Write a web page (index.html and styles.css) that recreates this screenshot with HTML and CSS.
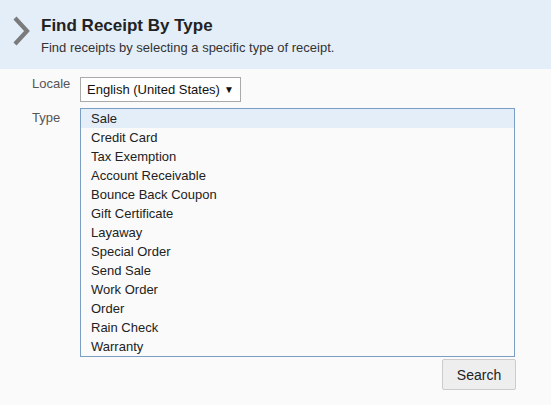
FILE: index.html
```html
<!DOCTYPE html>
<html>
<head>
<meta charset="utf-8">
<link rel="stylesheet" href="styles.css">
</head>
<body>
<div class="header">
  <svg class="chev" width="20" height="30" viewBox="0 0 20 30"><path d="M3 2 L15 15 L3 28" fill="none" stroke="#7b7b7b" stroke-width="4.2"/></svg>
  <div class="htext">
    <div class="title">Find Receipt By Type</div>
    <div class="sub">Find receipts by selecting a specific type of receipt.</div>
  </div>
</div>
<div class="form">
  <div class="row">
    <div class="label label-locale">Locale</div>
    <div class="select"><span>English (United States)</span><span class="arrow">▼</span></div>
  </div>
  <div class="row">
    <div class="label label-type">Type</div>
    <div class="col">
      <div class="list">
        <div class="item sel">Sale</div>
        <div class="item">Credit Card</div>
        <div class="item">Tax Exemption</div>
        <div class="item">Account Receivable</div>
        <div class="item">Bounce Back Coupon</div>
        <div class="item">Gift Certificate</div>
        <div class="item">Layaway</div>
        <div class="item">Special Order</div>
        <div class="item">Send Sale</div>
        <div class="item">Work Order</div>
        <div class="item">Order</div>
        <div class="item">Rain Check</div>
        <div class="item">Warranty</div>
      </div>
      <div class="actions"><button class="btn">Search</button></div>
    </div>
  </div>
</div>
</body>
</html>
```
FILE: styles.css
```css
html, body { margin: 0; padding: 0; }
body {
  background: #fafafa;
  font-family: "Liberation Sans", Arial, sans-serif;
  font-size: 13px;
  color: #222;
  width: 551px;
  height: 405px;
  overflow: hidden;
}
.header {
  height: 69px;
  background: #e3eef9;
  display: flex;
  align-items: flex-start;
  box-sizing: border-box;
  padding: 16px 0 0 12px;
}
.chev { margin-top: 0; flex: none; }
.htext { margin-left: 9px; }
.title {
  font-size: 17px;
  font-weight: bold;
  color: #222;
  line-height: 20px;
}
.sub {
  font-size: 13px;
  color: #333;
  margin-top: 4px;
  line-height: 15px;
}
.form { padding: 8px 0 0 32px; }
.row { display: flex; align-items: flex-start; }
.row + .row { margin-top: 6px; }
.label {
  width: 48px;
  color: #555;
  font-size: 13px;
  flex: none;
}
.label-locale { line-height: 15px; margin-top: -1px; }
.label-type { line-height: 15px; margin-top: 2px; }
.select {
  box-sizing: border-box;
  width: 161px;
  height: 25px;
  border: 1px solid #aaa;
  background: #fff;
  display: flex;
  align-items: center;
  justify-content: space-between;
  padding: 0 6px 0 6px;
  color: #111;
}
.arrow { font-size: 10px; color: #111; }
.col { display: flex; flex-direction: column; align-items: flex-end; }
.list {
  width: 433px;
  border: 1px solid #7a9ec4;
  background: #fafafa;
}
.item {
  height: 19px;
  line-height: 19px;
  padding-left: 10px;
  color: #222;
}
.item.sel { background: #e3eef9; }
.actions { margin-top: 2px; }
.btn {
  box-sizing: border-box;
  width: 74px;
  height: 31px;
  margin-right: -1px;
  background: #eee;
  border: 1px solid #ccc;
  border-radius: 2px;
  font-family: "Liberation Sans", Arial, sans-serif;
  font-size: 14px;
  color: #222;
  padding: 0;
}
```
